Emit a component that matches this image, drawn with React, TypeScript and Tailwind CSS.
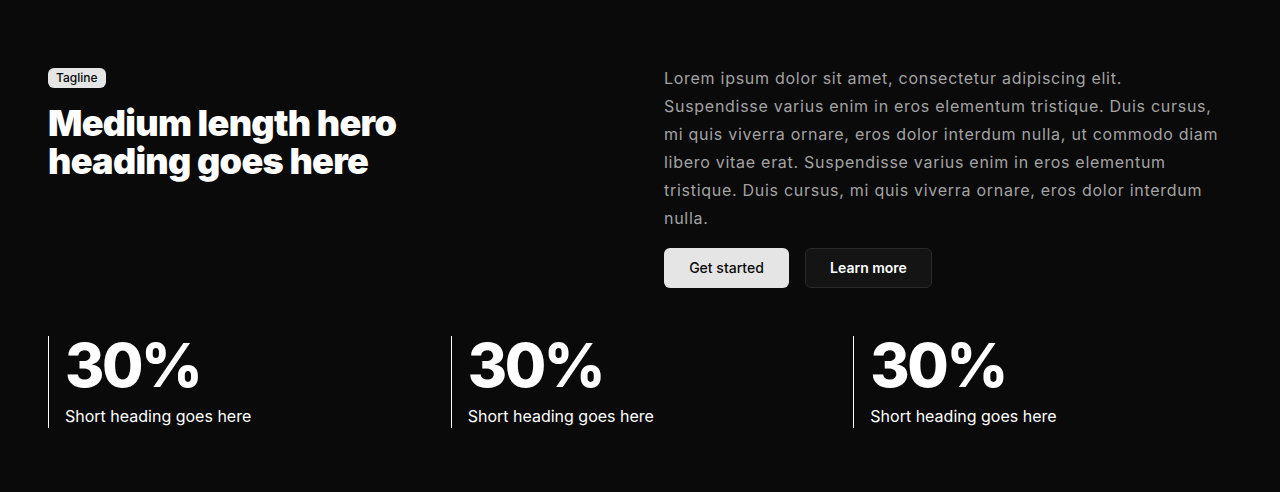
const stats = [
  { value: '30%', label: 'Short heading goes here' },
  { value: '30%', label: 'Short heading goes here' },
  { value: '30%', label: 'Short heading goes here' },
];

const lines = [
  'Lorem ipsum dolor sit amet, consectetur adipiscing elit.',
  'Suspendisse varius enim in eros elementum tristique. Duis cursus,',
  'mi quis viverra ornare, eros dolor interdum nulla, ut commodo diam',
  'libero vitae erat. Suspendisse varius enim in eros elementum',
  'tristique. Duis cursus, mi quis viverra ornare, eros dolor interdum',
  'nulla.',
];

export default function App() {
  return (
    <div className="min-h-[492px] bg-[#0a0a0a] px-12 pt-16 pb-16 font-['Inter',sans-serif] text-white">
      <div className="grid grid-cols-2 gap-12">
        <div>
          <span className="inline-block rounded-md bg-[#e5e5e5] px-2 py-[3px] text-xs font-medium leading-[14px] text-[#0a0a0a]">
            Tagline
          </span>
          <h1 className="mt-4 max-w-[420px] text-4xl font-black leading-[38px] tracking-[-0.02em]">
            Medium length hero heading goes here
          </h1>
        </div>
        <div>
          <p className="whitespace-nowrap text-base leading-7 tracking-[0.045em] text-[#a3a3a3]">
            {lines.map((l, i) => (
              <span key={i}>
                {l}
                {i < lines.length - 1 && <br />}
              </span>
            ))}
          </p>
          <div className="mt-4 flex items-center gap-4">
            <button
              type="button"
              className="h-10 w-[125px] rounded-md bg-[#e5e5e5] text-sm font-medium text-[#0a0a0a]"
            >
              Get started
            </button>
            <button
              type="button"
              className="h-10 w-[127px] rounded-md border border-[#2a2a2a] bg-[#141414] text-sm font-semibold text-white"
            >
              Learn more
            </button>
          </div>
        </div>
      </div>

      <div className="mt-12 grid grid-cols-3 gap-6">
        {stats.map((s, i) => (
          <div key={i} className="border-l border-white pl-4">
            <div className="text-6xl font-extrabold leading-[58px] tracking-[-0.04em]">{s.value}</div>
            <div className="mt-[10px] text-base leading-6">{s.label}</div>
          </div>
        ))}
      </div>
    </div>
  );
}
